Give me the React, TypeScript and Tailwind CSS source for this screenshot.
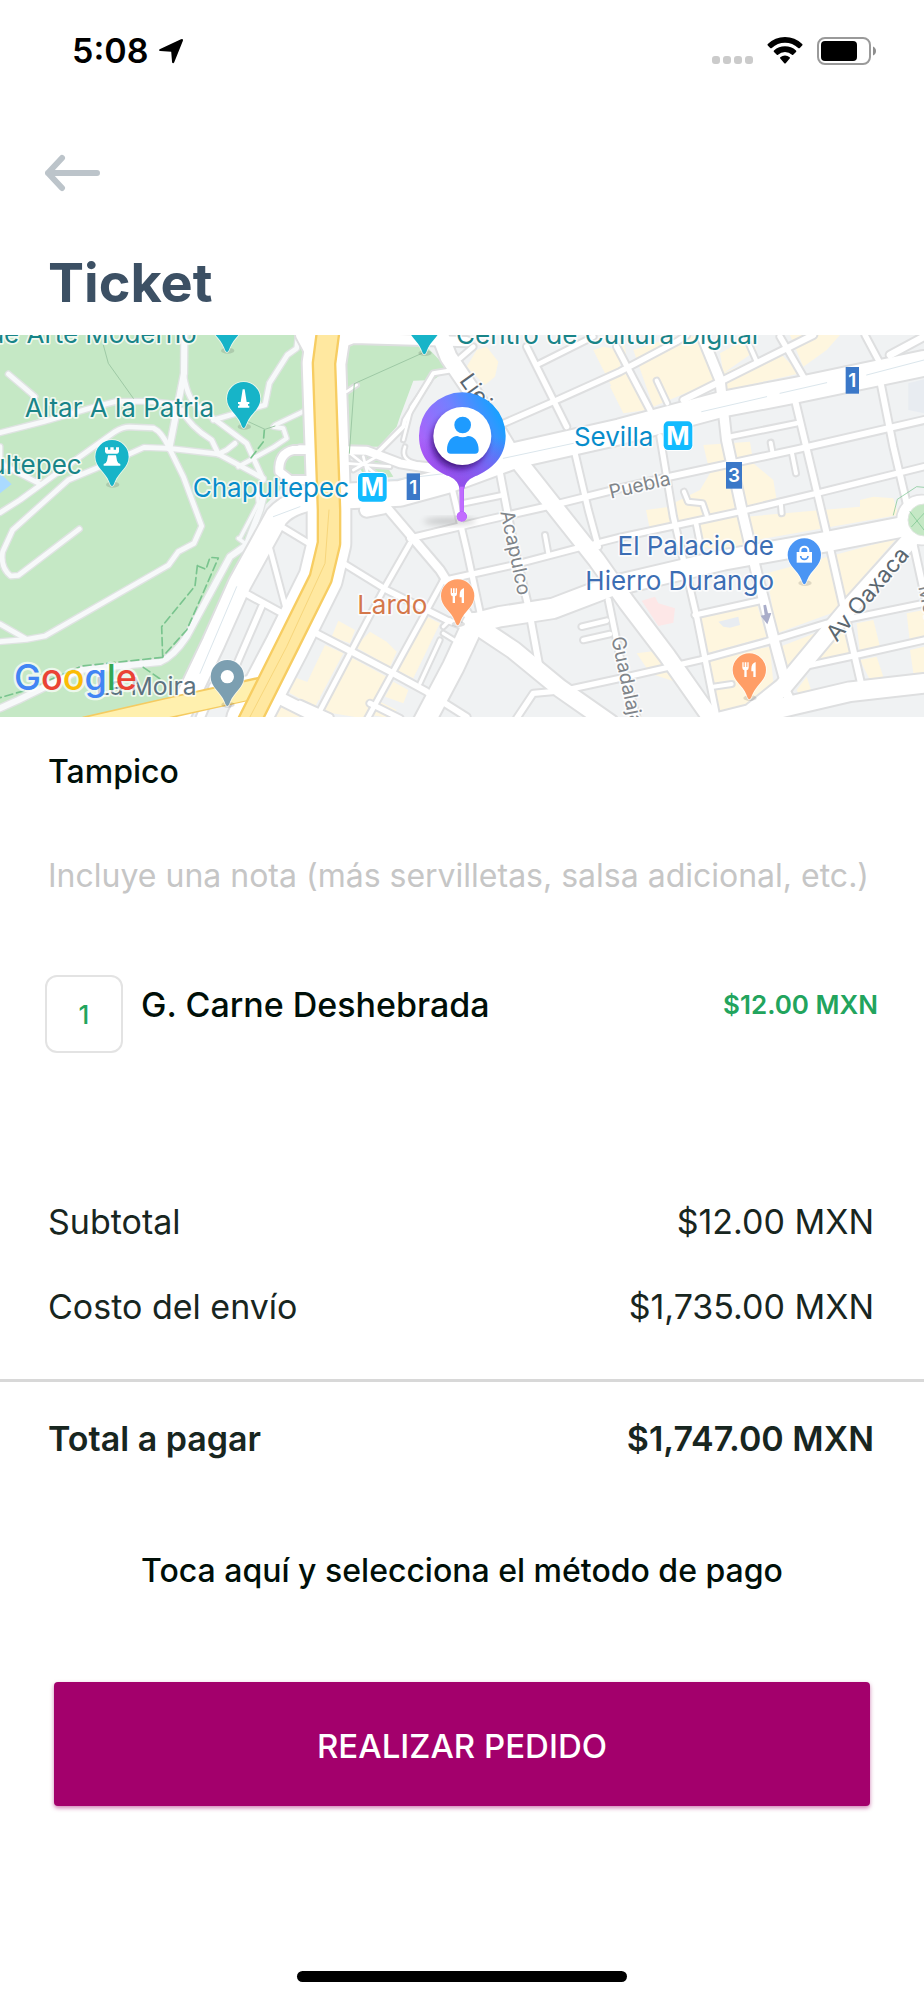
import React from "react";

type Road = [x: number, d: string, width: number];

/* Map geometry uses a 2772-unit wide space; each entry starts with its tile's x origin. */
const PARK_ROADS: Road[] = [
  [0, "M25 132 L105 200", 14],
  [0, "M0 308 L130 275 L280 232 L350 214 L450 214 L520 222", 14],
  [0, "M553 15 L552 130 L508 355", 18],
  [0, "M552 140 Q565 215 600 235 L740 340 L790 450", 14],
  [0, "M545 240 Q570 290 635 330 L655 372", 14],
  [0, "M895 15 L890 55 L862 75 L808 160 L795 225 L640 270", 14],
  [0, "M0 548 L60 510 L170 430 L345 305 Q370 290 390 291 L460 294 Q485 305 508 355", 14],
  [0, "M508 355 L432 352 L330 398 L205 450 L38 600 L8 665 Q0 712 32 738 L55 736 L238 597", 14],
  [0, "M508 355 L655 372 L790 445", 14],
  [0, "M0 350 L0 400 L120 462", 14],
  [0, "M508 355 L550 440 L605 588 L582 640 L535 665 L505 706 L135 918 L80 928 L0 935", 14],
  [0, "M0 882 L75 925", 14],
  [0, "M0 1135 L55 1110 L240 1020 L480 996 Q520 980 560 920 L690 680 L740 645 L780 540 L790 500", 18],
  [0, "M715 625 L735 640 M720 625 L775 520 L770 470", 10],
  [0, "M655 372 L680 360 L705 340", 14],
  [0, "M820 290 L850 295 L860 325 L820 352 L715 410", 12],
  [0, "M825 285 L930 235", 12],
];

const ROADS: Road[] = [
  [0, "M930 360 L880 360 Q835 370 838 425 L870 450 L930 450", 24],
  [0, "M905 15 L945 90", 34],
  [0, "M1020 500 Q880 500 830 560 L720 760 L640 940 L530 1170", 66],
  [0, "M985 15 L972 100 L987 540 L987 640 L962 745 L860 950 L745 1170", 128],
  [0, "M820 575 L960 660", 16],
  [0, "M795 600 L860 845", 14],
  [0, "M700 770 L880 868", 18],
  [0, "M785 830 L690 1050", 16],
  [0, "M830 1100 L960 1165", 34],
  [0, "M600 1165 L640 1070 L740 1050", 22],
  [0, "M1020 40 L1060 25 L1400 35", 28],
  [900, "M100 500 L300 490 L440 452 L650 375 L960 305 L1270 222 L1490 180 L1872 100", 74],
  [900, "M420 15 L445 80 L560 250 L620 350 L660 400 L890 690 L980 817 L1100 975 L1230 1160", 48],
  [900, "M0 358 L200 362 L300 400 L480 430", 24],
  [900, "M230 370 L310 290 L315 270 L400 130 L460 120", 12],
  [900, "M315 350 Q300 390 350 400 L450 410 M310 330 L335 230 L390 150", 8],
  [900, "M140 185 L170 165", 8],
  [900, "M150 370 L250 450 M140 400 L270 410 M160 420 L230 380 M190 380 L210 460", 8],
  [900, "M250 520 L420 720 L520 880", 24],
  [900, "M200 540 L250 530", 40],
  [900, "M330 640 L250 780 L50 1161", 14],
  [900, "M430 750 L370 860 L200 1170", 14],
  [900, "M130 700 L260 780 L440 870 L520 900", 16],
  [900, "M30 900 L270 1025 L380 1085 L500 1161", 18],
  [900, "M0 1120 L90 1161 M210 1120 L300 1165", 16],
  [900, "M430 890 L450 870 M430 910 L470 935 M420 930 L360 1060", 10],
  [900, "M330 625 L560 570 L760 525 L960 475 L1110 440 L1490 358 L1872 270", 18],
  [900, "M430 752 L640 705 L830 655 L960 622 L1320 545 L1550 490 L1872 410", 16],
  [900, "M455 470 L500 660 L545 870", 16],
  [900, "M490 520 L610 495", 14],
  [900, "M600 430 L640 640 L685 830 L720 1020", 18],
  [900, "M825 370 L865 540 L895 650", 16],
  [900, "M735 615 L745 670", 12],
  [900, "M600 285 L760 215 L960 125 L1130 35 L1160 15", 16],
  [900, "M680 50 L740 170 L800 290", 16],
  [900, "M710 105 L880 20", 14],
  [900, "M480 85 L520 50", 14],
  [900, "M520 880 L600 860 L760 835 L930 770 L1270 690 L1590 633 L1810 590", 58],
  [900, "M520 880 L460 1010 L370 1180", 62],
  [900, "M520 880 L640 960 L780 1075 L930 1180", 50],
  [900, "M845 890 L920 872 M850 930 L930 912", 14],
  [900, "M925 810 L960 980 L1010 1160", 16],
  [900, "M650 1165 L700 1090 L790 1082 L960 1045 L1200 990 L1400 935 L1580 880 L1872 820", 16],
  [1830, "M20 50 L120 240", 16],
  [1830, "M150 320 L190 560 L260 860 L320 1160", 16],
  [1830, "M275 15 L330 150 L350 330 L400 560 L440 730 L500 960 L530 1070", 28],
  [1830, "M510 20 L580 140", 16],
  [1830, "M555 210 L610 440 L650 610 L700 830 L760 1090", 18],
  [1830, "M765 15 L805 90", 16],
  [1830, "M810 150 L850 350 L890 520", 18],
  [1830, "M910 640 L945 800", 18],
  [1830, "M360 320 L560 280", 14],
  [1830, "M255 855 L450 812", 16],
  [1830, "M580 1010 L720 980 L942 930", 16],
  [1830, "M220 210 L340 150 L560 40 L610 15", 18],
  [1830, "M140 152 L172 220", 12],
  [1830, "M482 338 L488 370", 12],
  [1830, "M545 365 L558 430", 12],
  [1830, "M512 515 L515 550", 12],
  [1830, "M222 485 L234 515 L278 520 L290 555", 12],
  [1830, "M258 580 L270 640", 14],
  [1830, "M418 45 L440 95", 12],
  [1830, "M310 1070 L365 1062", 12],
  [1830, "M840 75 L942 20", 20],
  [1830, "M900 630 L720 830 L520 1070 L420 1150 L300 1180", 50],
  [1830, "M400 1160 L550 1125 L720 1085 L942 1060", 56],
  [1830, "M520 1070 L550 1130", 26],
];

const BLOCKS: Road[] = [
  [900, "M530 60 L560 50 L595 95 L585 140 L555 165 L500 110Z", 0],
  [900, "M880 60 L910 50 L960 60 L960 220Z", 0],
  [900, "M115 872 L165 900 L150 940 L95 920Z", 0],
  [900, "M210 905 L260 935 L290 965 L270 1010 L165 950Z", 0],
  [900, "M380 860 L420 880 L340 1045 L290 1020Z", 0],
  [900, "M75 945 L130 970 L45 1130 L-30 1090 L-30 1050 L20 1060Z", 0],
  [900, "M150 980 L260 1040 L190 1165 L70 1145Z", 0],
  [900, "M280 1055 L325 1080 L310 1120 L255 1100Z", 0],
  [900, "M240 1115 L290 1140 L270 1165 L215 1155Z", 0],
  [0, "M850 1080 L880 1040 L960 1070 L960 1110Z", 0],
  [0, "M820 1161 L830 1120 L900 1161Z", 0],
  [1830, "M70 60 L210 15 L260 20 L320 150 L130 230Z", 0],
  [1830, "M0 60 L40 20 L50 90 L0 120Z M0 170 L50 120 L110 240 L40 250Z", 0],
  [1830, "M340 130 L500 60 L570 130 L350 180Z M330 70 L420 20 L440 60 L340 130Z M540 15 L690 15 L650 60 L580 110Z", 0],
  [1830, "M280 345 L420 335 L430 400 L490 450 L500 510 L300 560 L195 580 L190 520 L270 480 L300 430Z", 0],
  [1830, "M108 540 L180 530 L190 580 L118 590Z", 0],
  [1830, "M265 580 L380 550 L430 670 L270 650Z", 0],
  [1830, "M410 560 L750 530 L750 510 L790 500 L850 505 L865 555 L440 630Z", 0],
  [1830, "M470 730 L860 625 L690 820 L690 840 L500 910Z", 0],
  [1830, "M260 865 L440 820 L470 920 L290 970Z", 0],
  [1830, "M80 970 L160 960 L210 1060 L150 1040 L120 1030Z", 0],
  [1830, "M290 985 L480 950 L490 1060 L430 1130 L330 1150Z", 0],
  [1830, "M510 950 L640 900 L560 1000 L540 1040Z", 0],
  [1830, "M600 960 L700 900 L720 970 L620 1000Z", 0],
  [1830, "M740 880 L790 870 L810 950 L750 970Z M750 990 L800 980 L820 1040 L780 1050Z", 0],
  [1830, "M890 850 L942 840 L942 930 L900 940Z M900 960 L942 950 L942 1030 L910 1030Z", 0],
  [1830, "M560 1080 L590 1040 L610 1100 L570 1100Z", 0],
];

const PIN =
  "M-50 0 A50 50 0 1 1 50 0 C50 32 20 44 8 76 Q0 100 -8 76 C-20 44 -50 32 -50 0Z";

function Pin({ x, y, fill, children }: { x: number; y: number; fill: string; children?: React.ReactNode }) {
  return (
    <g transform={`translate(${x} ${y})`}>
      <ellipse cx="2" cy="84" rx="20" ry="9" fill="#000" opacity="0.12" />
      <path d={PIN} fill={fill} stroke="#fff" strokeOpacity="0.7" strokeWidth="5" paintOrder="stroke" />
      {children}
    </g>
  );
}

function Fork() {
  return (
    <path
      d="M-21 -23v16q0 7 6 8v20h7v-20q6 -1 6 -8v-16h-4v14h-3v-14h-5v14h-3v-14z M19 -24q-13 4 -13 20v8h6v17h7z"
      fill="#fff"
    />
  );
}

function MetroBadge({ x, y }: { x: number; y: number }) {
  return (
    <g transform={`translate(${x} ${y})`}>
      <rect width="86" height="86" rx="14" fill="#12bbff" stroke="#fff" strokeWidth="6" paintOrder="stroke" />
      <text x="43" y="70" fontSize="75" fontWeight="700" textAnchor="middle" fill="#fff">M</text>
    </g>
  );
}

function RouteBadge({ x, y, width, label }: { x: number; y: number; width: number; label: string }) {
  return (
    <g transform={`translate(${x} ${y})`}>
      <rect width={width} height="80" fill="#3b78c8" />
      <text x={width / 2} y="61" fontSize="57" fontWeight="600" textAnchor="middle" fill="#fff">{label}</text>
    </g>
  );
}

function DeliveryMap() {
  return (
    <svg
      viewBox="0 15 2772 1146"
      role="img"
      aria-label="Mapa de entrega"
      className="mt-5 block w-full font-['Inter','Liberation_Sans',sans-serif]"
    >
      <defs>
        <linearGradient id="pinFill" x1="0.95" y1="0.15" x2="0.15" y2="0.75">
          <stop offset="0" stopColor="#12a3ff" />
          <stop offset="0.45" stopColor="#757fff" />
          <stop offset="1" stopColor="#b75cf8" />
        </linearGradient>
        <linearGradient id="pinShade" x1="0" y1="0" x2="0" y2="1">
          <stop offset="0.35" stopColor="#8a2be2" stopOpacity="0" />
          <stop offset="0.7" stopColor="#8f3fe0" stopOpacity="0.9" />
          <stop offset="1" stopColor="#a94ff5" />
        </linearGradient>
        <filter id="soft" x="-50%" y="-50%" width="200%" height="200%">
          <feGaussianBlur stdDeviation="9" />
        </filter>
      </defs>

      <rect y="15" width="2772" height="1146" fill="#f0f2f3" />
      <path d="M0 15 H930 V350 L960 360 V450 L860 460 L790 530 L560 1070 L480 1125 L250 1161 H0Z" fill="#c5e8c5" />
      <path d="M1035 55 L1070 38 L1280 50 L1345 118 L1300 150 L1240 152 L1200 260 L1190 290 L1135 350 H1035Z" fill="#c5e8c5" />
      <path d="M1015 490 L1045 555 L1020 620Z M1060 380 L1130 360 L1180 440 L1100 450Z" fill="#c5e8c5" />
      <path d="M0 430 L35 463 L0 490Z" fill="#aadaff" />
      <g fill="#fef6df">
        {BLOCKS.map(([x, d], i) => <path key={i} d={d} transform={`translate(${x} 0)`} />)}
      </g>
      <path d="M1925 812 L1965 800 L1975 820 L2025 835 L2020 878 L1975 888Z" fill="#fde7e7" />
      <path d="M2155 875 L2215 860 L2220 885 L2190 893 L2170 890Z M2725 160 L2772 148 V250 L2725 240Z" fill="#e8ecf1" />

      <g fill="none" strokeLinecap="round" strokeLinejoin="round">
        <g stroke="#dfe3e2">
          {PARK_ROADS.map(([, d, w], i) => <path key={i} d={d} strokeWidth={w + 8} />)}
        </g>
        <g stroke="#f7f9fa">
          {PARK_ROADS.map(([, d, w], i) => <path key={i} d={d} strokeWidth={w} />)}
        </g>
        <g stroke="#dedfe0">
          {ROADS.map(([x, d, w], i) => <path key={i} d={d} strokeWidth={w + 12} transform={`translate(${x} 0)`} />)}
        </g>
        <circle cx="2765" cy="570" r="76" fill="#fff" stroke="#e0e1e2" strokeWidth="5" />
        <g stroke="#fff">
          {ROADS.map(([x, d, w], i) => <path key={i} d={d} strokeWidth={w} transform={`translate(${x} 0)`} />)}
        </g>
        <circle cx="2772" cy="570" r="48" fill="#c5e8c5" stroke="#e0e6e0" strokeWidth="3" />
        <g stroke="#79c48e" strokeWidth="3">
          <path d="M2680 555 L2692 508 L2750 470 L2772 472 M2730 545 L2772 600 M2735 590 L2772 550" opacity="0.7" />
          <path d="M592 707 L585 768 L485 890 L488 980 L560 900 L600 810 L655 684 L630 682 L618 718 L592 707" strokeWidth="5" strokeDasharray="24 12" />
          <path d="M488 982 L245 1008 L80 1080 L0 1103 M430 1012 L485 1050 M793 300 L790 335 L750 388" strokeWidth="5" strokeDasharray="24 12" />
        </g>
        <path d="M310 45 L325 100 L400 205 M745 275 L795 298 L825 288 M1065 160 L1270 68 M1063 160 L1048 370" stroke="#9ec9a5" strokeWidth="3" />
        <path d="M1510 385 L1720 340 M2105 245 L2300 200 M2340 190 L2480 158 M2600 135 L2772 90 M900 530 L820 560 M710 770 L600 1030" stroke="#dbe6ec" strokeWidth="3" />
        <path d="M260 1190 L500 1135 L780 1072" stroke="#f5cb61" strokeWidth="64" />
        <path d="M260 1190 L500 1135 L800 1070" stroke="#fff0ae" strokeWidth="54" />
        <path d="M985 0 L972 100 L987 540 L987 640 L962 745 L860 950 L740 1190" stroke="#f7cd62" strokeWidth="74" />
        <path d="M985 0 L972 100 L987 540 L987 640 L962 745 L860 950 L740 1190" stroke="#ffe8a0" strokeWidth="60" />
        <path d="M987 540 L975 700 L860 950 L745 1170" stroke="#f7d67c" strokeWidth="3" />
        <path d="M1090 460 L1340 430" stroke="#dbe6ec" strokeWidth="3" />
      </g>
      <path d="M2290 826 l8 -2 l6 26 l10 -1 l-12 34 l-20 -26 l12 -2z" fill="#a9adc9" />

      <g fontSize="78" stroke="#fff" strokeOpacity="0.75" strokeWidth="10" strokeLinejoin="round" paintOrder="stroke">
        <g fill="#188488">
          <text x="590" y="38" textAnchor="end">de Arte Moderno</text>
          <text x="642" y="262" textAnchor="end">Altar A la Patria</text>
          <text x="245" y="432" textAnchor="end">Chapultepec</text>
          <text x="1368" y="42">Centro de Cultura Digital</text>
        </g>
        <g fill="#078dcb">
          <text x="1047" y="500" textAnchor="end">Chapultepec</text>
          <text x="1960" y="347" textAnchor="end">Sevilla</text>
        </g>
        <text x="1282" y="852" textAnchor="end" fill="#d4774a">Lardo</text>
        <g fill="#3c6eb4" textAnchor="end">
          <text x="2322" y="676">El Palacio de</text>
          <text x="2322" y="780">Hierro Durango</text>
        </g>
        <text x="590" y="1094" textAnchor="end" fill="#5c7280" fontSize="74">La Moira</text>
        <g fill="#80858a" fontSize="58">
          <text transform="translate(1832 506) rotate(-13)">Puebla</text>
          <text transform="translate(1501 546) rotate(78)">Acapulco</text>
          <text transform="translate(1834 924) rotate(78)">Guadalajara</text>
          <text transform="translate(2755 770) rotate(78)">Monterrey</text>
        </g>
        <g fill="#5b6770" fontSize="68">
          <text transform="translate(1376 152) rotate(54)">Lieja</text>
          <text transform="translate(2510 938) rotate(-50)">Av Oaxaca</text>
        </g>
      </g>

      <MetroBadge x={1074} y={429} />
      <MetroBadge x={1991} y={274} />
      <RouteBadge x={1220} y={430} width={40} label="1" />
      <RouteBadge x={2537} y={111} width={40} label="1" />
      <RouteBadge x={2178} y={396} width={48} label="3" />

      <Pin x={681} y={-22} fill="#17b4c8" />
      <Pin x={1273} y={-15} fill="#17b4c8" />
      <Pin x={731} y={206} fill="#17b4c8">
        <path d="M-3 -28h6l6 38h8v6h-4v5h4v6h-34v-6h4v-5h-4v-6h8z" fill="#fff" />
      </Pin>
      <Pin x={336} y={380} fill="#17b4c8">
        <path d="M-21 -28h9v7h7v-7h10v7h7v-7h9v13q-2 6 -6 6h-30q-4 0 -6 -6z M-12 -4h24l3 16q2 8 10 10v5h-50v-5q8 -2 10 -10z" fill="#fff" />
      </Pin>
      <Pin x={1373} y={798} fill="#ff9e66"><Fork /></Pin>
      <Pin x={2248} y={1020} fill="#ff9e66"><Fork /></Pin>
      <Pin x={2413} y={675} fill="#4a95f4">
        <path d="M-23 -9h46v32h-46z" fill="#fff" />
        <path d="M-12 -8v-6a12 11 0 0 1 24 0v6" fill="none" stroke="#fff" strokeWidth="6" />
        <path d="M-11 3a11 10 0 0 0 22 0" fill="none" stroke="#4a95f4" strokeWidth="5" />
      </Pin>
      <Pin x={682} y={1040} fill="#7c9fb1"><circle r="20" fill="#fff" /></Pin>

      <g strokeLinejoin="round" stroke="#fff" strokeOpacity="0.7" strokeWidth="14" paintOrder="stroke" fontWeight="500">
        <text x="42" y="1080" fontSize="108" fill="#4285f4">
          G<tspan fill="#ea4335">o</tspan><tspan fill="#fbbc05">o</tspan><tspan fill="#4285f4">g</tspan>
          <tspan fill="#34a853">l</tspan><tspan fill="#ea4335">e</tspan>
        </text>
      </g>

      <ellipse cx="1350" cy="574" rx="80" ry="9" fill="#000" opacity="0.2" filter="url(#soft)" />
      <path d="M1257 317 A130 130 0 1 1 1517 317 C1517 385 1470 420 1425 439 Q1395 452 1392 478 L1391 545 A15 15 0 1 1 1380 545 L1379 478 Q1376 452 1348 439 C1300 420 1257 385 1257 317Z" fill="url(#pinFill)" />
      <path d="M1257 317 A130 130 0 1 1 1517 317 C1517 385 1470 420 1425 439 Q1395 452 1392 478 L1391 545 A15 15 0 1 1 1380 545 L1379 478 Q1376 452 1348 439 C1300 420 1257 385 1257 317Z" fill="url(#pinShade)" opacity="0.7" />
      <path d="M1385 470v75" stroke="#c06bff" strokeWidth="12" />
      <circle cx="1385" cy="560" r="15" fill="#c26cff" />
      <circle cx="1379" cy="333" r="84" fill="#3c0a78" opacity="0.9" filter="url(#soft)" />
      <circle cx="1387" cy="318" r="87" fill="#fff" />
      <circle cx="1388" cy="285" r="25" fill="#1e9bff" />
      <path d="M1341 360 C1341 335 1355 318 1372 318 Q1388 326 1404 318 C1422 318 1436 335 1436 360 Q1436 371 1425 371 H1352 Q1341 371 1341 360Z" fill="#1e9bff" />
    </svg>
  );
}

function StatusBar() {
  return (
    <div className="flex h-[101px] items-center justify-between pr-[47px] pl-[72px] text-black">
      <div className="flex items-center gap-2.5">
        <time className="text-[34px] leading-10 font-semibold">5:08</time>
        <svg viewBox="0 0 24 24" className="size-[26px]" aria-hidden="true">
          <path d="M2 10.2 21.2 1.2Q23.6 .4 22.9 2.8L15 22.4Q14 24 13 22.5L12.2 12.8 2.2 12Q-.2 11.4 2 10.2Z" fill="currentColor" />
        </svg>
      </div>
      <div className="flex items-center gap-3.5">
        <div className="mt-[18px] flex gap-[3px]">
          <span className="size-[8px] rounded-[3px] bg-[#cbcbcb]" />
          <span className="size-[8px] rounded-[3px] bg-[#cbcbcb]" />
          <span className="size-[8px] rounded-[3px] bg-[#cbcbcb]" />
          <span className="size-[8px] rounded-[3px] bg-[#cbcbcb]" />
        </div>
        <svg viewBox="0 0 36 27" className="h-[27px] w-9" aria-hidden="true">
          <path d="M18 0Q28 0 35.2 7 36 7.800 35.2 8.600L32.800 11Q32 11.600 31.200 11 25.500 5.700 18 5.700T4.800 11Q4 11.600 3.200 11L.8 8.600Q0 7.800 .8 7 8 0 18 0Z" />
          <path d="M18 9.300Q24.300 9.300 29 13.500 29.800 14.300 29 15L26.200 17.800Q25.600 18.300 25 17.800 22 15 18 15T11 17.800Q10.400 18.300 9.800 17.800L7 15Q6.200 14.300 7 13.500 11.700 9.300 18 9.300Z" />
          <path d="M18 18.600Q20.600 18.600 22.700 20.300 23.300 21 22.700 21.600L18.700 26.200Q18 26.900 17.300 26.200L13.300 21.600Q12.700 21 13.300 20.300 15.400 18.600 18 18.600Z" />
        </svg>
        <svg viewBox="0 0 60 28" className="h-7 w-[60px]" aria-hidden="true">
          <rect x="1" y="1" width="52" height="26" rx="7" fill="none" stroke="#9a9a9a" strokeWidth="2" />
          <rect x="4" y="4" width="36" height="20" rx="4" />
          <path d="M56 9.500Q59 11 59 14T56 18.500Z" fill="#8e8e8e" />
        </svg>
      </div>
    </div>
  );
}

function AmountRow({ label, amount }: { label: string; amount: string }) {
  return (
    <div className="flex items-baseline justify-between">
      <dt>{label}</dt>
      <dd>{amount}</dd>
    </div>
  );
}

export default function App() {
  return (
    <main className="flex min-h-screen w-full flex-col bg-white font-['Inter','Liberation_Sans',sans-serif] text-[#000f08]">
      <StatusBar />

      <header>
        <button type="button" aria-label="Volver" className="mt-10 ml-[45px] flex h-16 items-center text-[#bcc4ca]">
          <svg viewBox="0 0 56 38" className="h-[38px] w-14" fill="none" stroke="currentColor" strokeWidth="6" strokeLinecap="round" strokeLinejoin="round" aria-hidden="true">
            <path d="M52 19H3M17 4 3 19l14 15" />
          </svg>
        </button>
        <h1 className="mt-[46px] px-12 text-[54px] leading-[64px] font-bold text-[#3c5064]">Ticket</h1>
      </header>

      <DeliveryMap />

      <h2 className="mt-[35px] px-12 text-[32px] leading-10 font-medium">Tampico</h2>

      <input
        type="text"
        aria-label="Nota para el pedido"
        placeholder="Incluye una nota (más servilletas, salsa adicional, etc.)"
        className="mt-[51px] h-16 w-full px-12 text-[32px] text-[#000f08] outline-none placeholder:text-[#c6c6c6] placeholder:opacity-100"
      />

      <section className="mt-[68px] flex pr-[46px] pl-[45px]">
        <div className="flex size-[78px] shrink-0 items-center justify-center rounded-xl border-2 border-[#e3e3e3] text-[26px] font-medium text-[#22a45d]">
          1
        </div>
        <div className="flex flex-1 justify-between pt-2.5 pl-[18px] leading-10">
          <h3 className="text-[34px] font-medium">G. Carne Deshebrada</h3>
          <p className="text-[26px] font-semibold text-[#22a45d]">$12.00 MXN</p>
        </div>
      </section>

      <dl className="mt-[149px] text-[34px] leading-10 text-[#18261f]">
        <div className="flex flex-col gap-[45px] pr-[50px] pb-[52px] pl-12">
          <AmountRow label="Subtotal" amount="$12.00 MXN" />
          <AmountRow label="Costo del envío" amount="$1,735.00 MXN" />
        </div>
        <div className="border-t-[3px] border-[#d8d8d8] pt-[37px] pr-[50px] pl-12 font-semibold">
          <AmountRow label="Total a pagar" amount="$1,747.00 MXN" />
        </div>
      </dl>

      <button type="button" className="mx-12 mt-[92px] text-center text-[32px] leading-10 font-medium">
        Toca aquí y selecciona el método de pago
      </button>

      <button
        type="button"
        className="mx-[54px] mt-[91px] h-[124px] rounded-[4px] bg-[#a3006c] pt-1 text-[33px] leading-10 font-medium text-white shadow-[0_2px_4px_rgba(163,0,108,0.5)]"
      >
        REALIZAR PEDIDO
      </button>

      <div className="mx-auto mt-auto mb-[18px] h-[11px] w-[330px] rounded-full bg-black" />
    </main>
  );
}
